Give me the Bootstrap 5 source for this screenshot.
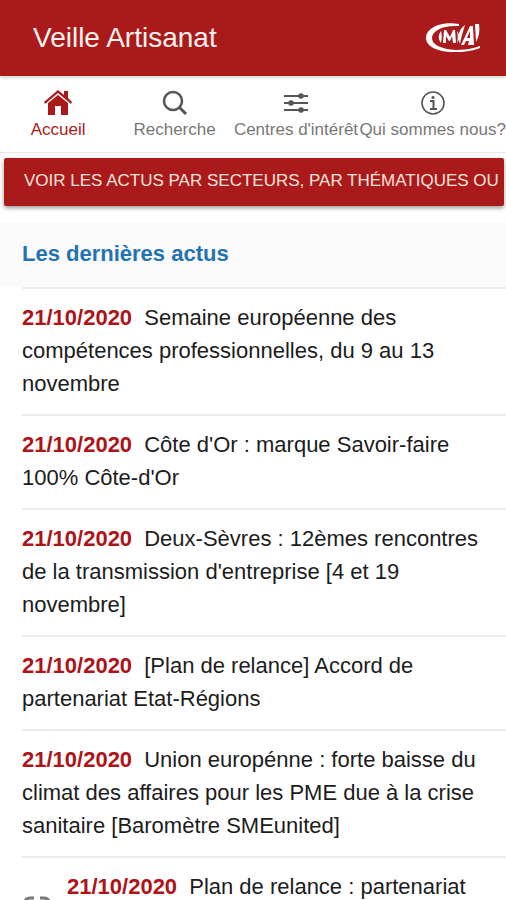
<!DOCTYPE html>
<html lang="fr">
<head>
<meta charset="utf-8">
<meta name="viewport" content="width=device-width, initial-scale=1">
<title>Veille Artisanat</title>
<link href="https://cdn.jsdelivr.net/npm/bootstrap@5.3.0/dist/css/bootstrap.min.css" rel="stylesheet">
<style>
  :root { --brand: #ab1a1a; --date: #ae1318; --line: #ececec; }
  body { font-family: "Liberation Sans", Arial, sans-serif; color: #1c1c1c; background: #fff; overflow-x: hidden; }
  .app-bar { background: var(--brand); height: 76px; padding: 0 24px 0 33px; box-shadow: 0 2px 3px #d9d4d4; position: relative; }
  .app-title { font-size: 28px; line-height: 32px; color: #fff3f0; }
  .tabs-bar { height: 77px; padding-top: 13px; border-bottom: 1px solid #e6e6e6; }
  .tab-link { font-size: 17px; line-height: 20px; color: #777; text-decoration: none; white-space: nowrap; min-width: 0; }
  .tab-link svg { width: 28px; height: 28px; margin-bottom: 3px; color: #555; }
  .tab-link.active, .tab-link.active svg { color: var(--brand); }
  .tab-home { flex: 0 0 23%; }
  .tab-search { flex: 0 0 23%; }
  .tab-topics { flex: 0 0 25%; }
  .tab-about { flex: 0 0 29%; }
  .filter-wrap { padding: 5px 2px 0 4px; }
  .filter-btn { background: var(--brand); color: #ffe3de; font-size: 17px; line-height: 20px; padding: 13px 0 15px 20px; border: 0; border-radius: 2px; white-space: nowrap; overflow: hidden; box-shadow: 0 2px 4px #999; }
  .section-head { background: #fafafa; padding-left: 22px; margin-top: 17px; }
  .section-title { color: #2273b3; font-size: 22px; line-height: 32px; padding: 15px 0 17px; }
  .news-item { margin-left: 22px; padding: 12px 24px 14px 0; border-top: 2px solid var(--line); font-size: 22px; line-height: 33px; }
  .news-item a { color: inherit; text-decoration: none; }
  .news-date { color: var(--date); margin-right: 6px; }
  .scan-icon { width: 30px; height: 30px; margin: 26px 15px 0 0; color: #777; }
</style>
</head>
<body>
<header class="app-bar d-flex align-items-center justify-content-between">
  <h1 class="app-title fw-normal m-0">Veille Artisanat</h1>
  <svg width="58" height="32" viewBox="0 0 58 32" role="img" aria-label="CMA" fill="#fff">
    <path d="M35 2C15-1 2 7 2 16c0 9 14 15 31 14 10 0 18-2 23-4v-2c-9 3-17 4-24 4C17 27 8 23 8 16 8 9 18 3 35 4z"/>
    <path d="M17 9c-3 4-3 8 0 12 1-4 1-8 0-12zM20 8h2l4 7 3-7h2l1 13h-3l-1-7-2 5h-1l-3-5v7h-3zM33 9c3 4 3 8 0 12 1-4 1-8 0-12z"/>
    <path d="M41 3c-6 4-8 11-5 19 1-7 3-12 5-19zM46 4h3l1 19h-6l1-4h-3l-2 4h-3zM46 9l-3 7h3zM51 2h4c1 7 0 13-3 18z" fill-rule="evenodd"/>
  </svg>
</header>
<nav class="tabs-bar d-flex" aria-label="Navigation principale">
  <a class="tab-link tab-home active d-flex flex-column align-items-center" href="#" aria-current="page">
    <svg viewBox="0 0 28 28" fill="currentColor" aria-hidden="true"><path d="M14 1L0 13l1 2L14 4l13 11 1-2-4-4V2h-4v4zM14 6L4 14v12h7v-9h6v9h7V14z"/></svg>
    Accueil</a>
  <a class="tab-link tab-search d-flex flex-column align-items-center" href="#">
    <svg viewBox="0 0 28 28" fill="none" stroke="currentColor" aria-hidden="true"><circle cx="12" cy="12" r="9" stroke-width="2.5"/><path d="M18 18l7 7" stroke-width="3"/></svg>
    Recherche</a>
  <a class="tab-link tab-topics d-flex flex-column align-items-center" href="#">
    <svg viewBox="0 0 28 28" fill="currentColor" stroke="currentColor" aria-hidden="true"><path d="M2 7h24M2 14h24M2 21h24" stroke-width="2"/><g stroke="none"><circle cx="19" cy="7" r="2.8"/><circle cx="9" cy="14" r="2.8"/><circle cx="19" cy="21" r="2.8"/></g></svg>
    Centres d'intérêt</a>
  <a class="tab-link tab-about d-flex flex-column align-items-center" href="#">
    <svg viewBox="0 0 28 28" fill="none" stroke="currentColor" aria-hidden="true"><circle cx="14" cy="14" r="11" stroke-width="1.6"/><circle cx="14" cy="8.5" r="1.6" fill="currentColor" stroke="none"/><path d="M11 12h3.500v8M11 20h7" stroke-width="2"/></svg>
    Qui sommes nous?</a>
</nav>
<main>
  <div class="filter-wrap d-grid">
    <button type="button" class="filter-btn text-start text-uppercase">Voir les actus par secteurs, par thématiques ou</button>
  </div>
  <div class="section-head">
    <h2 class="section-title fw-bold m-0">Les dernières actus</h2>
  </div>
  <ul class="list-unstyled m-0">
    <li class="news-item"><a href="#"><strong class="news-date">21/10/2020</strong> Semaine européenne des compétences professionnelles, du 9 au 13 novembre</a></li>
    <li class="news-item"><a href="#"><strong class="news-date">21/10/2020</strong> Côte d'Or : marque Savoir-faire 100% Côte-d'Or</a></li>
    <li class="news-item"><a href="#"><strong class="news-date">21/10/2020</strong> Deux-Sèvres : 12èmes rencontres de la transmission d'entreprise [4 et 19 novembre]</a></li>
    <li class="news-item"><a href="#"><strong class="news-date">21/10/2020</strong> [Plan de relance] Accord de partenariat Etat-Régions</a></li>
    <li class="news-item"><a href="#"><strong class="news-date">21/10/2020</strong> Union europénne : forte baisse du climat des affaires pour les PME due à la crise sanitaire [Baromètre SMEunited]</a></li>
    <li class="news-item d-flex pb-0">
      <svg class="scan-icon flex-shrink-0" viewBox="0 0 30 30" fill="none" stroke="currentColor" stroke-width="3" aria-hidden="true"><path d="M12 2H8Q3 2 3 7v4M18 2h4q5 0 5 5v4M12 28H8q-5 0-5-5v-4M18 28h4q5 0 5-5v-4"/></svg>
      <a href="#"><strong class="news-date">21/10/2020</strong> Plan de relance : partenariat</a></li>
  </ul>
</main>
<script src="https://cdn.jsdelivr.net/npm/bootstrap@5.3.0/dist/js/bootstrap.bundle.min.js"></script>
</body>
</html>
